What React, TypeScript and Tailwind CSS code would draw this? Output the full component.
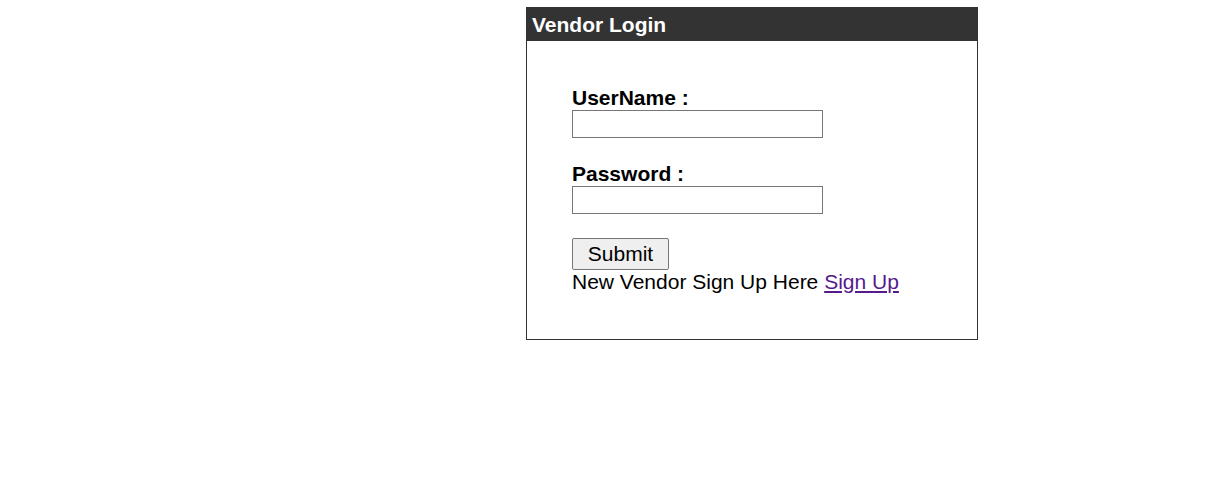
import React from "react";

export default function App() {
  return (
    <div className="min-h-[477px] bg-white pt-[7px] pl-[526px] font-['Liberation_Sans',Arial,sans-serif] text-black">
      <div className="w-[452px] border border-[#333333]">
        <div className="flex h-[33px] items-center bg-[#333333] pl-[5px] text-[21px] font-bold text-white">
          Vendor Login
        </div>
        <form className="flex flex-col pb-[45px] pl-[45px] pt-[45px]" onSubmit={(e) => e.preventDefault()}>
          <label className="text-[21px] font-bold leading-[24px]">UserName :</label>
          <input type="text" className="h-[28px] w-[251px] border border-[#767676] bg-white px-1 text-[16px] outline-none" />
          <label className="mt-[24px] text-[21px] font-bold leading-[24px]">Password :</label>
          <input type="password" className="h-[28px] w-[251px] border border-[#767676] bg-white px-1 text-[16px] outline-none" />
          <div className="mt-[24px] flex">
            <button type="submit" className="h-[32px] w-[97px] rounded-[2px] border border-[#767676] bg-[#efefef] text-[21px] leading-[24px]">
              Submit
            </button>
          </div>
          <div className="text-[21px] leading-[24px]">
            New Vendor Sign Up Here{" "}
            <a href="#" className="text-[#551a8b] underline">
              Sign Up
            </a>
          </div>
        </form>
      </div>
    </div>
  );
}
